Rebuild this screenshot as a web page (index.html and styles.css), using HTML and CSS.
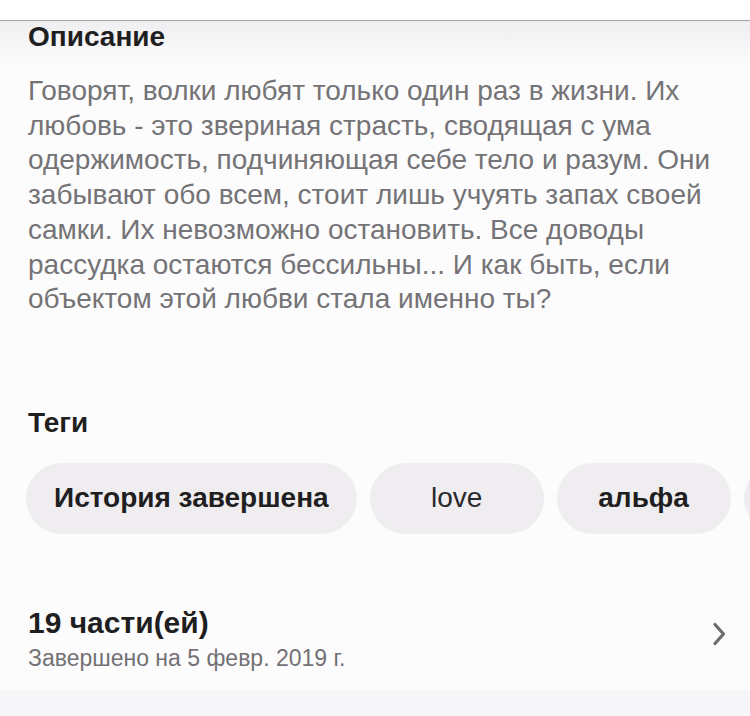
FILE: index.html
```html
<!DOCTYPE html>
<html lang="ru">
  <head>
    <meta charset="UTF-8" />
    <meta name="viewport" content="width=device-width, initial-scale=1.0" />
    <title>Описание</title>
    <link rel="stylesheet" href="styles.css">
  </head>
  <body>
    <div class="topbar"></div>

    <!-- Description -->
    <section class="description">
      <h2 class="section-title">Описание</h2>
      <p class="description-text">
        Говорят, волки любят только один раз в жизни. Их<br />
        любовь - это звериная страсть, сводящая с ума<br />
        одержимость, подчиняющая себе тело и разум. Они<br />
        забывают обо всем, стоит лишь учуять запах своей<br />
        самки. Их невозможно остановить. Все доводы<br />
        рассудка остаются бессильны... И как быть, если<br />
        объектом этой любви стала именно ты?
      </p>
    </section>

    <!-- Tags -->
    <section class="tags">
      <h2 class="section-title">Теги</h2>
      <div class="tag-list">
        <span class="tag">История завершена</span>
        <span class="tag tag-light">love</span>
        <span class="tag">альфа</span>
        <span class="tag tag-more" aria-hidden="true"></span>
      </div>
    </section>

    <!-- Parts -->
    <a class="parts" href="#">
      <div class="parts-info">
        <div class="parts-count">19 части(ей)</div>
        <div class="parts-date">Завершено на 5 февр. 2019 г.</div>
      </div>
      <svg class="chevron" width="16" height="26" viewBox="0 0 16 26">
        <path d="M4 3.5 L12.5 13 L4 22.5" fill="none" stroke="#6b6a6d" stroke-width="3.2" stroke-linecap="round" stroke-linejoin="round" />
      </svg>
    </a>

    <div class="bottom-band"></div>
  </body>
</html>
```

FILE: styles.css
```css
body {
  margin: 0;
  padding: 0;
  background: #fdfcfd;
  font-family: "Liberation Sans", Arial, sans-serif;
  color: #222;
  overflow: hidden;
}

.topbar {
  height: 20px;
  background: #fff;
  border-bottom: 1px solid #a3a3a5;
}

.section-title {
  margin: 0;
  font-size: 28px;
  line-height: 30px;
  font-weight: bold;
  color: #1f1e21;
}

/* Description */
.description {
  padding: 1px 28px 0;
  background: linear-gradient(to bottom, #efeef0 0px, #fdfcfd 45px);
}

.description-text {
  margin: 22px 0 0;
  font-size: 28px;
  line-height: 34.7px;
  color: #747376;
  white-space: nowrap;
}

/* Tags */
.tags {
  padding: 91px 0 0 26px;
}

.tags .section-title {
  padding-left: 2px;
}

.tag-list {
  display: flex;
  gap: 13px;
  margin-top: 25px;
  white-space: nowrap;
}

.tag {
  flex-shrink: 0;
  min-width: 118px;
  height: 71px;
  padding: 0 28px;
  display: flex;
  align-items: center;
  justify-content: center;
  background: #efedf0;
  border-radius: 36px;
  font-size: 28px;
  font-weight: bold;
  color: #1f1e21;
}

.tag-light {
  font-weight: normal;
  color: #2a292c;
}

/* Parts */
.parts {
  display: flex;
  align-items: flex-start;
  justify-content: space-between;
  padding: 72px 23px 0 28px;
  text-decoration: none;
}

.parts-count {
  font-size: 30px;
  font-weight: bold;
  color: #1f1e21;
  line-height: 34px;
}

.parts-date {
  margin-top: 5px;
  font-size: 23px;
  color: #727174;
  line-height: 26px;
}

.chevron {
  margin-top: 15px;
}

.bottom-band {
  margin-top: 19px;
  height: 40px;
  background: #f6f5f7;
}
```
